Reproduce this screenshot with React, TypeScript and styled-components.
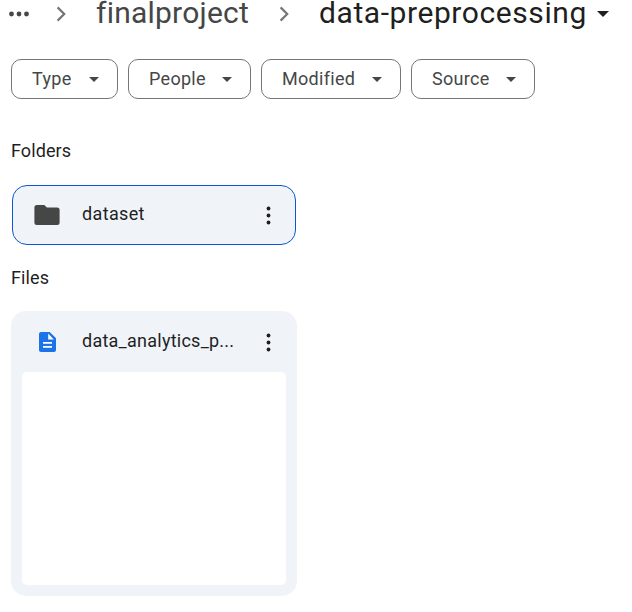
import React from "react";
import styled, { createGlobalStyle } from "styled-components";

const GlobalStyle = createGlobalStyle`
  * { box-sizing: border-box; }
  body { margin: 0; background: #fff; overflow: hidden; font-family: Roboto, "Liberation Sans", sans-serif; color: #1f1f1f; }
  svg { display: block; flex: none; }
`;

const Page = styled.main`
  width: 632px;
  height: 612px;
  padding-left: 11px;
`;

const Breadcrumbs = styled.nav`
  display: flex;
  align-items: center;
  height: 28px;
  margin-left: -3px;
`;

const Crumb = styled.span<{ $current?: boolean; $width: number }>`
  flex: none;
  width: ${(p) => p.$width}px;
  padding-bottom: 2px;
  font-size: 30px;
  line-height: 26px;
  font-weight: 400;
  letter-spacing: ${(p) => (p.$current ? 0.58 : 0.22)}px;
  white-space: nowrap;
  color: ${(p) => (p.$current ? "#1f1f1f" : "#444746")};
`;

const Separator = styled.span<{ $before: number; $after: number }>`
  margin-left: ${(p) => p.$before}px;
  margin-right: ${(p) => p.$after}px;
`;

const Filters = styled.div`
  display: flex;
  gap: 10px;
  margin-top: 31px;
`;

const Chip = styled.button<{ $width: number }>`
  display: flex;
  align-items: center;
  justify-content: space-between;
  width: ${(p) => p.$width}px;
  height: 40px;
  padding: 0 18px 0 20px;
  border: 1px solid #747775;
  border-radius: 10px;
  background: #fff;
  color: #444746;
  font: 400 18px/24px Roboto, sans-serif;
  letter-spacing: 0.3px;
`;

const Heading = styled.h2<{ $top: number }>`
  margin: ${(p) => p.$top}px 0 0;
  font-size: 18px;
  line-height: 24px;
  font-weight: 400;
  letter-spacing: 0.1px;
`;

const FolderCard = styled.article`
  display: flex;
  align-items: center;
  width: 284px;
  height: 60px;
  margin: 22px 0 0 1px;
  padding: 0 18px 0 21px;
  border: 1px solid #0b57d0;
  border-radius: 15px;
  background: #f0f4f9;
`;

const FileCard = styled.article`
  width: 286px;
  height: 285px;
  margin-top: 21px;
  padding: 0 11px 11px;
  border-radius: 15px;
  background: #f0f4f9;
`;

const FileHeader = styled.header`
  display: flex;
  align-items: center;
  height: 61px;
  padding: 0 9px 0 17px;
`;

const Name = styled.span<{ $gap: number; $spacing: number }>`
  flex: 1;
  margin-left: ${(p) => p.$gap}px;
  padding-bottom: 2px;
  font-size: 18px;
  line-height: 24px;
  font-weight: 400;
  letter-spacing: ${(p) => p.$spacing}px;
  white-space: nowrap;
`;

const Preview = styled.div`
  height: 213px;
  border-radius: 5px;
  background: #fff;
`;

const DropArrow = ({ width = 10, height = 5 }: { width?: number; height?: number }) => (
  <svg width={width} height={height} viewBox="0 0 10 5" preserveAspectRatio="none" fill="currentColor">
    <path d="M0 0h10L5 5z" />
  </svg>
);

const Chevron = () => (
  <svg width="10" height="16" viewBox="0 0 10 16" fill="none" stroke="#747775" strokeWidth="2.2">
    <path d="M1.6 1.4 8.2 8l-6.6 6.6" />
  </svg>
);

const More = () => (
  <svg width="22" height="6" viewBox="0 0 22 6" fill="#444746">
    <circle cx="3.5" cy="3" r="2.4" />
    <circle cx="11" cy="3" r="2.4" />
    <circle cx="18.5" cy="3" r="2.4" />
  </svg>
);

const Kebab = () => (
  <svg width="18" height="20" viewBox="0 0 18 20" fill="#1f1f1f">
    <circle cx="9.5" cy="3.5" r="1.9" />
    <circle cx="9.5" cy="10.5" r="1.9" />
    <circle cx="9.5" cy="17.5" r="1.9" />
  </svg>
);

const FolderIcon = () => (
  <svg width="26" height="20" viewBox="0 0 26 20" fill="#444746">
    <path d="M2.9 0h7.4l2.6 2.6h10.2a2.5 2.5 0 0 1 2.5 2.5v12.4a2.5 2.5 0 0 1-2.5 2.5H2.9a2.5 2.5 0 0 1-2.5-2.5v-15A2.5 2.5 0 0 1 2.9 0z" />
  </svg>
);

const DocIcon = () => (
  <svg width="17" height="20" viewBox="0 0 17 20">
    <path fill="#1a73e8" d="M2 0h8.7L17 6.2V18a2 2 0 0 1-2 2H2a2 2 0 0 1-2-2V2a2 2 0 0 1 2-2z" />
    <path fill="#fff" d="M9.2 1.5v6h5.6zM4 10h9v1.8H4zM4 14h9v1.8H4z" />
  </svg>
);

const filters = [
  { label: "Type", width: 107 },
  { label: "People", width: 123 },
  { label: "Modified", width: 140 },
  { label: "Source", width: 124 },
];

export default function App() {
  return (
    <Page>
      <GlobalStyle />
      <Breadcrumbs>
        <More />
        <Separator $before={26} $after={30}><Chevron /></Separator>
        <Crumb $width={153}>finalproject</Crumb>
        <Separator $before={30} $after={30}><Chevron /></Separator>
        <Crumb $current $width={278}>data-preprocessing</Crumb>
        <DropArrow width={12} height={6} />
      </Breadcrumbs>
      <Filters>
        {filters.map((f) => (
          <Chip key={f.label} $width={f.width}>{f.label}<DropArrow /></Chip>
        ))}
      </Filters>
      <Heading $top={40}>Folders</Heading>
      <FolderCard>
        <FolderIcon />
        <Name $gap={22} $spacing={0.35}>dataset</Name>
        <Kebab />
      </FolderCard>
      <Heading $top={21}>Files</Heading>
      <FileCard>
        <FileHeader>
          <DocIcon />
          <Name $gap={26} $spacing={0.25}>data_analytics_p...</Name>
          <Kebab />
        </FileHeader>
        <Preview />
      </FileCard>
    </Page>
  );
}
